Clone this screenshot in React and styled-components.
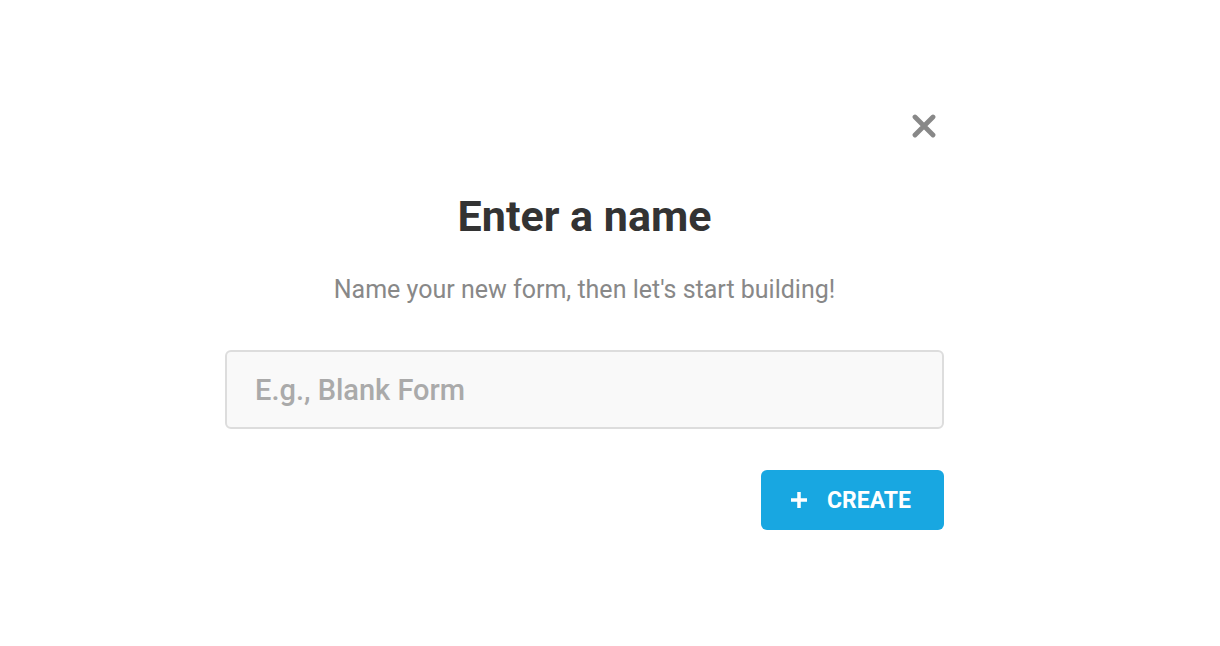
import React from "react";
import styled, { createGlobalStyle } from "styled-components";

const Global = createGlobalStyle`
  html, body { margin: 0; padding: 0; background: #fff; }
  body { font-family: Roboto, "Noto Sans", sans-serif; }
  * { box-sizing: border-box; }
`;

const Page = styled.div`
  width: 1220px;
  height: 646px;
  padding: 72px 0 0 184px;
`;

const Modal = styled.div`
  position: relative;
  width: 800px;
  height: 492px;
  padding: 118px 40px 0 41px;
  display: flex;
  flex-direction: column;
  align-items: center;
`;

const Close = styled.button`
  position: absolute;
  top: 40px;
  right: 46px;
  width: 28px;
  height: 28px;
  padding: 0;
  border: none;
  background: transparent;
  display: flex;
  align-items: center;
  justify-content: center;
  cursor: pointer;
`;

const Title = styled.h1`
  margin: 0;
  font-size: 43px;
  font-weight: 700;
  color: #333;
  line-height: 52px;
`;

const Subtitle = styled.p`
  margin: 33px 0 0;
  font-size: 25px;
  color: #888;
  line-height: 30px;
`;

const Input = styled.input`
  margin-top: 45px;
  width: 100%;
  height: 79px;
  border: 2px solid #ddd;
  border-radius: 6px;
  background: #f9f9f9;
  padding: 0 28px;
  font-family: Roboto, sans-serif;
  font-size: 29px;
  font-weight: 500;
  color: #333;
  outline: none;
  &::placeholder { color: #aaa; }
`;

const Actions = styled.div`
  width: 100%;
  display: flex;
  justify-content: flex-end;
  margin-top: 41px;
`;

const Button = styled.button`
  width: 183px;
  height: 60px;
  border: none;
  border-radius: 6px;
  background: #18a7e1;
  color: #fff;
  font-family: Roboto, sans-serif;
  font-size: 23px;
  font-weight: 700;
  display: flex;
  align-items: center;
  justify-content: center;
  gap: 19px;
  padding-left: 2px;
  cursor: pointer;
`;

export default function App() {
  return (
    <>
      <Global />
      <Page>
        <Modal>
          <Close aria-label="close">
            <svg width="24" height="24" viewBox="0 0 24 24">
              <path d="M3 3L21 21M21 3L3 21" stroke="#888" strokeWidth="4.8" strokeLinecap="round" />
            </svg>
          </Close>
          <Title>Enter a name</Title>
          <Subtitle>Name your new form, then let's start building!</Subtitle>
          <Input placeholder="E.g., Blank Form" />
          <Actions>
            <Button>
              <svg width="18" height="18" viewBox="0 0 18 18">
                <path d="M9 1V17M1 9H17" stroke="#fff" strokeWidth="3.5" />
              </svg>
              CREATE
            </Button>
          </Actions>
        </Modal>
      </Page>
    </>
  );
}
